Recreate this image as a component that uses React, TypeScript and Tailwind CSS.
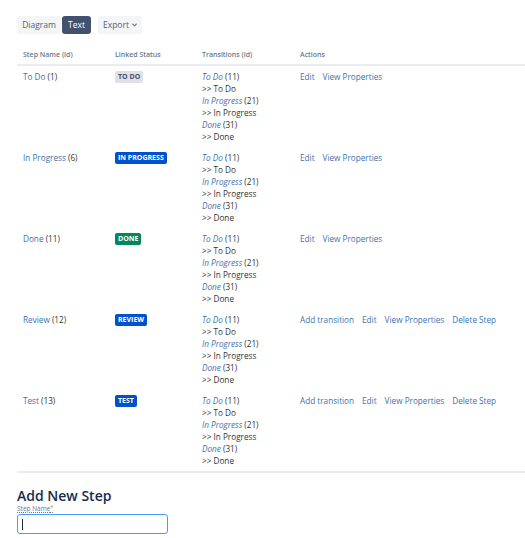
import React from 'react';

type Step = {
  name: string;
  id: number;
  status: string;
  lozenge: string;
  actions: string[];
};

const steps: Step[] = [
  { name: 'To Do', id: 1, status: 'TO DO', lozenge: 'bg-[#dfe1e6] text-[#42526e]', actions: ['Edit', 'View Properties'] },
  { name: 'In Progress', id: 6, status: 'IN PROGRESS', lozenge: 'bg-[#0052cc] text-white', actions: ['Edit', 'View Properties'] },
  { name: 'Done', id: 11, status: 'DONE', lozenge: 'bg-[#00875a] text-white', actions: ['Edit', 'View Properties'] },
  { name: 'Review', id: 12, status: 'REVIEW', lozenge: 'bg-[#0052cc] text-white', actions: ['Add transition', 'Edit', 'View Properties', 'Delete Step'] },
  { name: 'Test', id: 13, status: 'TEST', lozenge: 'bg-[#0052cc] text-white', actions: ['Add transition', 'Edit', 'View Properties', 'Delete Step'] },
];

const transitions = [
  { name: 'To Do', id: 11 },
  { name: 'In Progress', id: 21 },
  { name: 'Done', id: 31 },
];

export default function App() {
  return (
    <div className="min-h-[538px] bg-white pl-[17px] pt-[16px] text-[8.2px] leading-[12px] text-[#333]" style={{ fontFamily: '"Open Sans", "Noto Sans", sans-serif' }}>
      {/* view switcher */}
      <div className="flex items-center text-[8.5px]">
        <button className="h-[18px] w-[44px] rounded-[3px] bg-[#f4f5f7] text-[#505f79]">Diagram</button>
        <button className="ml-[1px] h-[18px] w-[29px] rounded-[3px] bg-[#42526e] text-white">Text</button>
        <button className="ml-[7px] flex h-[18px] w-[44px] items-center justify-center gap-[3px] rounded-[3px] bg-[#f4f5f7] text-[#505f79]">
          Export
          <svg width="5" height="4" viewBox="0 0 6 4"><path d="M0.5 0.5 L3 3 L5.5 0.5" stroke="#6b778c" strokeWidth="1.3" fill="none" /></svg>
        </button>
      </div>

      {/* steps table */}
      <table className="mt-[15px] w-full border-collapse">
        <thead>
          <tr className="border-b-2 border-[#ebecf0] text-left text-[7px] text-[#6b778c]">
            <th className="w-[92px] px-[6px] pb-[3px] font-semibold">Step Name (id)</th>
            <th className="w-[87px] px-[6px] pb-[3px] font-semibold">Linked Status</th>
            <th className="w-[98px] px-[6px] pb-[3px] font-semibold">Transitions (id)</th>
            <th className="px-[6px] pb-[3px] font-semibold">Actions</th>
          </tr>
        </thead>
        <tbody>
          {steps.map((s, i) => (
            <tr key={s.id} className={i === steps.length - 1 ? 'border-b-2 border-[#ebecf0]' : ''}>
              <td className="px-[6px] pt-[5px] pb-[4px] align-top">
                <span className="text-[#3b73af]">{s.name}</span> ({s.id})
              </td>
              <td className="px-[6px] pt-[4px] pb-[4px] align-top">
                <span className={`inline-block rounded-[2px] px-[3px] text-[7px] leading-[12px] font-bold ${s.lozenge}`}>{s.status}</span>
              </td>
              <td className="px-[6px] pt-[5px] pb-[4px] align-top">
                {transitions.map((t) => (
                  <div key={t.id}>
                    <div><i className="text-[#3b73af]">{t.name}</i> ({t.id})</div>
                    <div>&gt;&gt; {t.name}</div>
                  </div>
                ))}
              </td>
              <td className="px-[6px] pt-[5px] pb-[4px] align-top">
                <div className="flex gap-[8px] whitespace-nowrap text-[#3b73af]">
                  {s.actions.map((a) => (
                    <span key={a}>{a}</span>
                  ))}
                </div>
              </td>
            </tr>
          ))}
        </tbody>
      </table>

      {/* add step form */}
      <h2 className="mt-[14px] text-[14px] leading-[18px] font-semibold text-[#172b4d]">Add New Step</h2>
      <label className="block text-[6.5px] leading-[8px] text-[#6b778c] underline decoration-dotted">
        Step Name<sup className="text-[#de350b]">*</sup>
      </label>
      <div className="mt-[1px] flex h-[20px] w-[151px] items-center rounded-[3px] border border-[#4c9aff] bg-white px-[4px]">
        <div className="h-[11px] w-px bg-[#172b4d]" />
      </div>
    </div>
  );
}
